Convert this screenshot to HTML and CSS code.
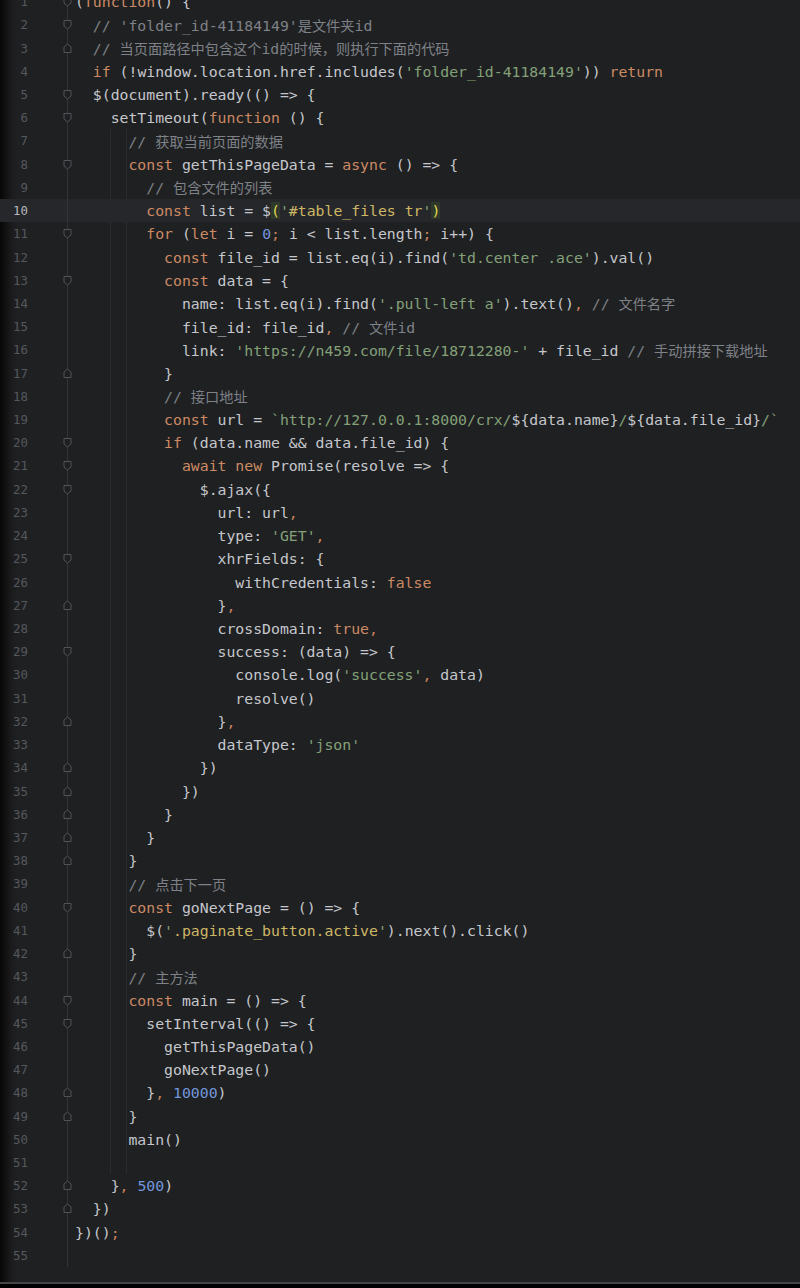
FILE: index.html
```html
<!DOCTYPE html>
<html lang="zh">
<head>
<meta charset="utf-8">
<title>editor</title>
<link rel="stylesheet" href="styles.css">
</head>
<body>
<svg class="defs" width="0" height="0" aria-hidden="true">
  <symbol id="fs" viewBox="0 0 9 11"><path d="M1 1.5 H8 V7 L4.5 10 L1 7 Z"/></symbol>
  <symbol id="fe" viewBox="0 0 9 11"><path d="M1 9.5 H8 V4 L4.5 1 L1 4 Z"/></symbol>
</svg>
<div class="editor">
  <div class="lines">
    <div class="row"><span class="ln">1</span><span class="fold"><svg class="fm"><use href="#fs"/></svg></span><span class="code">(<span class="k">function</span>() {</span></div>
    <div class="row"><span class="ln">2</span><span class="fold"><svg class="fm"><use href="#fs"/></svg></span><span class="code">  <span class="c">// 'folder_id-41184149'<span class="zh">是文件夹</span>id</span></span></div>
    <div class="row"><span class="ln">3</span><span class="fold"><svg class="fm"><use href="#fe"/></svg></span><span class="code">  <span class="c">// <span class="zh">当页面路径中包含这个</span>id<span class="zh">的时候，则执行下面的代码</span></span></span></div>
    <div class="row"><span class="ln">4</span><span class="fold"></span><span class="code">  <span class="k">if</span> (!window.location.href.includes(<span class="s">'folder_id-41184149'</span>)) <span class="k">return</span></span></div>
    <div class="row"><span class="ln">5</span><span class="fold"><svg class="fm"><use href="#fs"/></svg></span><span class="code">  $(document).ready(() =&gt; {</span></div>
    <div class="row"><span class="ln">6</span><span class="fold"><svg class="fm"><use href="#fs"/></svg></span><span class="code">    setTimeout(<span class="k">function</span> () {</span></div>
    <div class="block">
    <div class="row"><span class="ln">7</span><span class="fold"></span><span class="code">      <span class="c">// <span class="zh">获取当前页面的数据</span></span></span></div>
    <div class="row"><span class="ln">8</span><span class="fold"><svg class="fm"><use href="#fs"/></svg></span><span class="code">      <span class="k">const</span> getThisPageData = <span class="k">async</span> () =&gt; {</span></div>
    <div class="row"><span class="ln">9</span><span class="fold"></span><span class="code">        <span class="c">// <span class="zh">包含文件的列表</span></span></span></div>
    <div class="row current"><span class="ln">10</span><span class="fold"></span><span class="code">        <span class="k">const</span> list = $<span class="b">(</span><span class="s">'</span><span class="y">#table_files tr</span><span class="s">'</span><span class="b">)</span></span></div>
    <div class="row"><span class="ln">11</span><span class="fold"><svg class="fm"><use href="#fs"/></svg></span><span class="code">        <span class="k">for</span> (<span class="k">let</span> i = <span class="n">0</span><span class="p">;</span> i &lt; list.length<span class="p">;</span> i++) {</span></div>
    <div class="row"><span class="ln">12</span><span class="fold"></span><span class="code">          <span class="k">const</span> file_id = list.eq(i).find(<span class="s">'td.center .ace'</span>).val()</span></div>
    <div class="row"><span class="ln">13</span><span class="fold"><svg class="fm"><use href="#fs"/></svg></span><span class="code">          <span class="k">const</span> data = {</span></div>
    <div class="row"><span class="ln">14</span><span class="fold"></span><span class="code">            name: list.eq(i).find(<span class="s">'.pull-left a'</span>).text()<span class="p">,</span> <span class="c">// <span class="zh">文件名字</span></span></span></div>
    <div class="row"><span class="ln">15</span><span class="fold"></span><span class="code">            file_id: file_id<span class="p">,</span> <span class="c">// <span class="zh">文件</span>id</span></span></div>
    <div class="row"><span class="ln">16</span><span class="fold"></span><span class="code">            link: <span class="s">'https://n459.com/file/18712280-'</span> + file_id <span class="c">// <span class="zh">手动拼接下载地址</span></span></span></div>
    <div class="row"><span class="ln">17</span><span class="fold"><svg class="fm"><use href="#fe"/></svg></span><span class="code">          }</span></div>
    <div class="row"><span class="ln">18</span><span class="fold"></span><span class="code">          <span class="c">// <span class="zh">接口地址</span></span></span></div>
    <div class="row"><span class="ln">19</span><span class="fold"></span><span class="code">          <span class="k">const</span> url = <span class="s">`http://127.0.0.1:8000/crx/</span>${data.name}<span class="s">/</span>${data.file_id}<span class="s">/`</span></span></div>
    <div class="row"><span class="ln">20</span><span class="fold"><svg class="fm"><use href="#fs"/></svg></span><span class="code">          <span class="k">if</span> (data.name &amp;&amp; data.file_id) {</span></div>
    <div class="row"><span class="ln">21</span><span class="fold"><svg class="fm"><use href="#fs"/></svg></span><span class="code">            <span class="k">await new</span> Promise(resolve =&gt; {</span></div>
    <div class="row"><span class="ln">22</span><span class="fold"><svg class="fm"><use href="#fs"/></svg></span><span class="code">              $.ajax({</span></div>
    <div class="row"><span class="ln">23</span><span class="fold"></span><span class="code">                url: url<span class="p">,</span></span></div>
    <div class="row"><span class="ln">24</span><span class="fold"></span><span class="code">                type: <span class="s">'GET'</span><span class="p">,</span></span></div>
    <div class="row"><span class="ln">25</span><span class="fold"><svg class="fm"><use href="#fs"/></svg></span><span class="code">                xhrFields: {</span></div>
    <div class="row"><span class="ln">26</span><span class="fold"></span><span class="code">                  withCredentials: <span class="k">false</span></span></div>
    <div class="row"><span class="ln">27</span><span class="fold"><svg class="fm"><use href="#fe"/></svg></span><span class="code">                }<span class="p">,</span></span></div>
    <div class="row"><span class="ln">28</span><span class="fold"></span><span class="code">                crossDomain: <span class="k">true</span><span class="p">,</span></span></div>
    <div class="row"><span class="ln">29</span><span class="fold"><svg class="fm"><use href="#fs"/></svg></span><span class="code">                success: (data) =&gt; {</span></div>
    <div class="row"><span class="ln">30</span><span class="fold"></span><span class="code">                  console.log(<span class="s">'success'</span><span class="p">,</span> data)</span></div>
    <div class="row"><span class="ln">31</span><span class="fold"></span><span class="code">                  resolve()</span></div>
    <div class="row"><span class="ln">32</span><span class="fold"><svg class="fm"><use href="#fe"/></svg></span><span class="code">                }<span class="p">,</span></span></div>
    <div class="row"><span class="ln">33</span><span class="fold"></span><span class="code">                dataType: <span class="s">'json'</span></span></div>
    <div class="row"><span class="ln">34</span><span class="fold"><svg class="fm"><use href="#fe"/></svg></span><span class="code">              })</span></div>
    <div class="row"><span class="ln">35</span><span class="fold"><svg class="fm"><use href="#fe"/></svg></span><span class="code">            })</span></div>
    <div class="row"><span class="ln">36</span><span class="fold"><svg class="fm"><use href="#fe"/></svg></span><span class="code">          }</span></div>
    <div class="row"><span class="ln">37</span><span class="fold"><svg class="fm"><use href="#fe"/></svg></span><span class="code">        }</span></div>
    <div class="row"><span class="ln">38</span><span class="fold"><svg class="fm"><use href="#fe"/></svg></span><span class="code">      }</span></div>
    <div class="row"><span class="ln">39</span><span class="fold"></span><span class="code">      <span class="c">// <span class="zh">点击下一页</span></span></span></div>
    <div class="row"><span class="ln">40</span><span class="fold"><svg class="fm"><use href="#fs"/></svg></span><span class="code">      <span class="k">const</span> goNextPage = () =&gt; {</span></div>
    <div class="row"><span class="ln">41</span><span class="fold"></span><span class="code">        $(<span class="s">'</span><span class="y">.paginate_button.active</span><span class="s">'</span>).next().click()</span></div>
    <div class="row"><span class="ln">42</span><span class="fold"><svg class="fm"><use href="#fe"/></svg></span><span class="code">      }</span></div>
    <div class="row"><span class="ln">43</span><span class="fold"></span><span class="code">      <span class="c">// <span class="zh">主方法</span></span></span></div>
    <div class="row"><span class="ln">44</span><span class="fold"><svg class="fm"><use href="#fs"/></svg></span><span class="code">      <span class="k">const</span> main = () =&gt; {</span></div>
    <div class="row"><span class="ln">45</span><span class="fold"><svg class="fm"><use href="#fs"/></svg></span><span class="code">        setInterval(() =&gt; {</span></div>
    <div class="row"><span class="ln">46</span><span class="fold"></span><span class="code">          getThisPageData()</span></div>
    <div class="row"><span class="ln">47</span><span class="fold"></span><span class="code">          goNextPage()</span></div>
    <div class="row"><span class="ln">48</span><span class="fold"><svg class="fm"><use href="#fe"/></svg></span><span class="code">        }<span class="p">,</span> <span class="n">10000</span>)</span></div>
    <div class="row"><span class="ln">49</span><span class="fold"><svg class="fm"><use href="#fe"/></svg></span><span class="code">      }</span></div>
    <div class="row"><span class="ln">50</span><span class="fold"></span><span class="code">      main()</span></div>
    <div class="row"><span class="ln">51</span><span class="fold"></span><span class="code"></span></div>
    </div>
    <div class="row"><span class="ln">52</span><span class="fold"><svg class="fm"><use href="#fe"/></svg></span><span class="code">    }<span class="p">,</span> <span class="n">500</span>)</span></div>
    <div class="row"><span class="ln">53</span><span class="fold"><svg class="fm"><use href="#fe"/></svg></span><span class="code">  })</span></div>
    <div class="row"><span class="ln">54</span><span class="fold"></span><span class="code">})()<span class="p">;</span></span></div>
    <div class="row"><span class="ln">55</span><span class="fold"></span><span class="code"></span></div>
  </div>
</div>
<div class="bottom"></div>
</body>
</html>
```
FILE: styles.css
```css
html, body {
  margin: 0;
  padding: 0;
}
body {
  width: 800px;
  height: 1288px;
  overflow: hidden;
  background: #000;
  display: flex;
  flex-direction: column;
}
.defs {
  position: absolute;
  width: 0;
  height: 0;
}
.editor {
  height: 1282px;
  overflow: hidden;
  background:
    linear-gradient(to right, #060606 0, #121213 6px, #1c1c1e 12px, rgba(31,32,34,0) 18px),
    #1f2022;
}
.lines {
  margin-top: -10px;
  display: flex;
  flex-direction: column;
}
.block {
  background-image:
    linear-gradient(#2b2c2f, #2b2c2f),
    linear-gradient(#2b2c2f, #2b2c2f);
  background-size: 1px 100%, 1px 100%;
  background-position: 110px 0, 126px 0;
  background-repeat: no-repeat;
}
.row {
  display: flex;
  align-items: center;
  height: 23.23px;
  font-family: "DejaVu Sans Mono", "Noto Sans CJK SC", monospace;
  font-size: 14.8px;
  color: #c5c7cc;
}
.row.current {
  background-color: #26272a;
}
.ln {
  width: 28px;
  flex: none;
  text-align: right;
  font-size: 12.4px;
  color: #55585d;
}
.current .ln {
  color: #b4b7bc;
}
.fold {
  width: 47px;
  height: 100%;
  flex: none;
  display: flex;
  align-items: center;
  justify-content: flex-end;
  padding-right: 3px;
  box-sizing: border-box;
  background: linear-gradient(#323437, #323437) 39px 0 / 1px 100% no-repeat;
}
.fm {
  width: 9px;
  height: 11px;
  fill: #1f2022;
  stroke: #505357;
  stroke-width: 1;
}
.code {
  white-space: pre;
  flex: 1;
}
.k { color: #cc8a64; }
.s { color: #84a079; }
.c { color: #7e8187; }
.n { color: #7397dc; }
.p { color: #c9825c; }
.y { color: #cdb766; }
.b { color: #e2d64c; background: #2f3a2c; }
.zh {
  font-family: "Noto Sans CJK SC", sans-serif;
  font-size: 14.2px;
}
.bottom {
  flex: 1;
  border-top: 2px solid #444547;
  background: #000;
}
```
